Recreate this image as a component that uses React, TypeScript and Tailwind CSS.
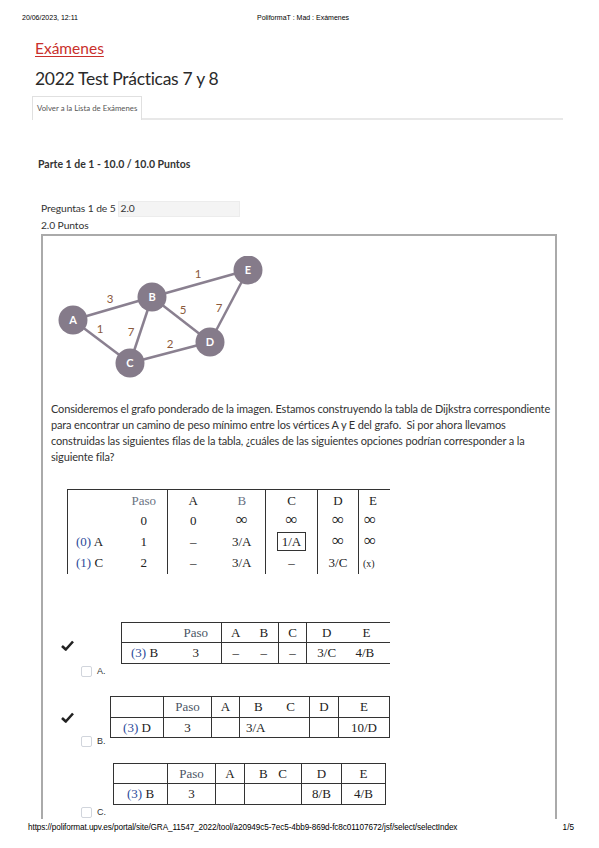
import React from 'react';

const sans = { fontFamily: '"Liberation Sans", Arial, sans-serif' };
const lato = { fontFamily: 'Lato, "Open Sans", sans-serif' };
const serif = { fontFamily: '"Liberation Serif", "DejaVu Serif", serif' };

const CheckMark = () => (
  <svg width="13" height="11" viewBox="0 0 13 11" className="shrink-0">
    <path d="M1 6 L4.8 9.5 L12 1.5" fill="none" stroke="#222" strokeWidth="2.6" strokeLinejoin="round" />
  </svg>
);

const Box = ({ label }: { label: string }) => (
  <div className="flex items-center gap-[5px]">
    <span className="w-[11px] h-[11px] border border-gray-300 rounded-[2px] bg-white" />
    <span className="text-[9px] text-[#333]" style={sans}>{label}</span>
  </div>
);

const Graph = () => {
  const n: Record<string, [number, number]> = {
    A: [22, 64], B: [101, 41], E: [197, 14], D: [159, 86], C: [79, 107],
  };
  const edges: [string, string][] = [['A', 'B'], ['A', 'C'], ['B', 'C'], ['B', 'D'], ['B', 'E'], ['D', 'E'], ['C', 'D']];
  const labels: [string, number, number][] = [
    ['3', 59, 47], ['1', 49, 77], ['7', 80, 80], ['5', 132, 58], ['1', 147, 22], ['7', 168, 56], ['2', 119, 92],
  ];
  return (
    <svg width="222" height="124" viewBox="0 0 222 124">
      {edges.map(([a, b]) => (
        <line key={a + b} x1={n[a][0]} y1={n[a][1]} x2={n[b][0]} y2={n[b][1]} stroke="#8a8090" strokeWidth="2.5" />
      ))}
      {labels.map(([t, x, y], i) => (
        <text key={i} x={x} y={y} textAnchor="middle" fontSize="11.5" fill="#8b5a3c" style={lato}>{t}</text>
      ))}
      {Object.entries(n).map(([k, [x, y]]) => (
        <g key={k}>
          <circle cx={x} cy={y} r="14.5" fill="#857b8a" />
          <text x={x} y={y + 4} textAnchor="middle" fontSize="11" fontWeight="bold" fill="#fff" style={lato}>{k}</text>
        </g>
      ))}
    </svg>
  );
};

const blue = 'text-[#2a4a9a]';
const Inf = () => <span className="text-[17px] leading-[10px]">∞</span>;

const DijkstraTable = () => {
  const cell = 'h-[21px] text-center px-0 font-normal';
  return (
    <div className="w-[323px] overflow-hidden ml-[16px]">
      <table className="border-collapse text-[13px] text-[#222] table-fixed w-[330px]" style={serif}>
        <colgroup>
          <col className="w-[53px]" /><col className="w-[47px]" /><col className="w-[51px]" /><col className="w-[47px]" />
          <col className="w-[52px]" /><col className="w-[41px]" /><col className="w-[39px]" />
        </colgroup>
        <tbody>
          <tr className="border-t-[1.5px] border-[#333]">
            <td className={`${cell} border-l border-[#333]`} />
            <td className={`${cell} border-r border-[#333] text-gray-500`}>Paso</td>
            <td className={cell}>A</td>
            <td className={`${cell} border-r border-[#333] text-gray-500`}>B</td>
            <td className={`${cell} border-r border-[#333]`}>C</td>
            <td className={`${cell} border-r border-[#333]`}>D</td>
            <td className={`${cell} text-left pl-[10px]`}>E</td>
          </tr>
          <tr>
            <td className={`${cell} border-l border-[#333]`} />
            <td className={`${cell} border-r border-[#333]`}>0</td>
            <td className={cell}>0</td>
            <td className={`${cell} border-r border-[#333]`}><Inf /></td>
            <td className={`${cell} border-r border-[#333]`}><Inf /></td>
            <td className={`${cell} border-r border-[#333]`}><Inf /></td>
            <td className={`${cell} text-left pl-[5px]`}><Inf /></td>
          </tr>
          <tr>
            <td className={`${cell} border-l border-[#333] text-left pl-[8px]`}><span className={blue}>(0)</span> A</td>
            <td className={`${cell} border-r border-[#333]`}>1</td>
            <td className={cell}>–</td>
            <td className={`${cell} border-r border-[#333]`}>3/A</td>
            <td className={`${cell} border-r border-[#333]`}><span className="border border-[#333] px-[4px] py-[1px]">1/A</span></td>
            <td className={`${cell} border-r border-[#333]`}><Inf /></td>
            <td className={`${cell} text-left pl-[5px]`}><Inf /></td>
          </tr>
          <tr>
            <td className={`${cell} border-l border-[#333] text-left pl-[8px]`}><span className={blue}>(1)</span> C</td>
            <td className={`${cell} border-r border-[#333]`}>2</td>
            <td className={cell}>–</td>
            <td className={`${cell} border-r border-[#333]`}>3/A</td>
            <td className={`${cell} border-r border-[#333]`}>–</td>
            <td className={`${cell} border-r border-[#333]`}>3/C</td>
            <td className={`${cell} text-left pl-[4px] text-[10px]`}>(x)</td>
          </tr>
        </tbody>
      </table>
    </div>
  );
};

const OptionA = () => {
  const c = 'h-[20px] text-center px-0 border-[#333]';
  return (
    <div className="w-[269px] overflow-hidden">
      <table className="border-collapse text-[13px] text-[#222] table-fixed w-[280px]" style={serif}>
        <colgroup>
          <col className="w-[49px]" /><col className="w-[51px]" /><col className="w-[28px]" /><col className="w-[29px]" />
          <col className="w-[28px]" /><col className="w-[40px]" /><col className="w-[55px]" />
        </colgroup>
        <tbody>
          <tr className="border-t border-b border-[#333]">
            <td className={`${c} border-l`} />
            <td className={`${c} border-r text-gray-600`}>Paso</td>
            <td className={c}>A</td>
            <td className={`${c} border-r`}>B</td>
            <td className={`${c} border-r`}>C</td>
            <td className={c}>D</td>
            <td className={`${c} text-left pl-[16px]`}>E</td>
          </tr>
          <tr className="border-b border-[#333]">
            <td className={`${c} border-l text-left pl-[9px] whitespace-nowrap`}><span className={blue}>(3)</span> B</td>
            <td className={`${c} border-r`}>3</td>
            <td className={c}>–</td>
            <td className={`${c} border-r`}>–</td>
            <td className={`${c} border-r`}>–</td>
            <td className={c}>3/C</td>
            <td className={`${c} text-left pl-[9px]`}>4/B</td>
          </tr>
        </tbody>
      </table>
    </div>
  );
};

const OptionTable = ({ widths, row }: { widths: number[]; row: React.ReactNode[] }) => {
  const c = 'h-[20px] px-0 border border-[#333] text-center';
  const head: React.ReactNode[] = [
    '',
    <span className="text-gray-600">Paso</span>,
    'A',
    <div className="flex justify-between px-[14px]"><span>B</span><span>C</span></div>,
    'D',
    'E',
  ];
  return (
    <table className="border-collapse text-[13px] text-[#222] table-fixed" style={{ ...serif, width: widths.reduce((a, b) => a + b, 0) }}>
      <colgroup>
        {widths.map((w, i) => <col key={i} style={{ width: w }} />)}
      </colgroup>
      <tbody>
        <tr>{head.map((h, i) => <td key={i} className={c}>{h}</td>)}</tr>
        <tr>{row.map((h, i) => <td key={i} className={c}>{h}</td>)}</tr>
      </tbody>
    </table>
  );
};

export default function App() {
  return (
    <div className="w-[599px] h-[848px] bg-white relative overflow-hidden text-[#333]" style={lato}>
      {/* print header */}
      <div className="flex h-[36px] items-center px-[22px] text-[7px] text-black" style={sans}>
        <span className="w-[235px]">20/06/2023, 12:11</span>
        <span>PoliformaT : Mad : Exámenes</span>
      </div>

      <div className="px-[35px]">
        <a className="block text-[15.5px] text-[#c9302c] underline underline-offset-2 leading-[22px] mt-[1px]">Exámenes</a>
        <h1 className="text-[17.5px] text-[#2a2a2a] leading-[24px] mt-[8px] tracking-[-0.3px]">2022 Test Prácticas 7 y 8</h1>
        <div className="flex mt-[5px] border-b-2 border-[#e8e8e8] w-[531px] -ml-[3px]">
          <div className="border border-b-0 border-[#e0e0e0] h-[24px] px-[4px] flex items-center text-[7.8px] text-[#555] -mb-[2px] bg-white">
            Volver a la Lista de Exámenes
          </div>
        </div>

        <h2 className="text-[10.5px] font-bold text-[#333] mt-[37px] ml-[3px] leading-[14px]">Parte 1 de 1 - 10.0 / 10.0 Puntos</h2>

        <div className="ml-[6px] mt-[29px] text-[10.3px] text-[#333] tracking-[-0.1px]">
          <div className="flex items-center h-[17px]">
            <span>Preguntas 1 de 5</span>
            <span className="ml-[2px] w-[122px] h-[16px] bg-[#f4f4f4] border border-[#ececec] flex items-center px-[2px] text-[10.3px]">2.0</span>
          </div>
          <div className="leading-[14px] mt-[1px]">2.0 Puntos</div>
        </div>

        {/* question box */}
        <div className="ml-[6px] mt-[2px] w-[516px] h-[585px] border-2 border-b-0 border-[#aaa] pl-[8px] pt-[20px]">
          <Graph />
          <p className="mt-[21px] text-[11px] leading-[16px] text-[#333] w-[500px] tracking-[-0.15px]">
            Consideremos el grafo ponderado de la imagen. Estamos construyendo la tabla de Dijkstra correspondiente
            para encontrar un camino de peso mínimo entre los vértices A y E del grafo.&nbsp; Si por ahora llevamos
            construidas las siguientes filas de la tabla, ¿cuáles de las siguientes opciones podrían corresponder a la
            siguiente fila?
          </p>

          <div className="mt-[24px]">
            <DijkstraTable />
          </div>

          {/* option A */}
          <div className="mt-[48px] flex items-center">
            <div className="w-[70px] pl-[10px] pt-[6px]"><CheckMark /></div>
            <OptionA />
          </div>
          <div className="ml-[30px] mt-[1px]"><Box label="A." /></div>

          {/* option B */}
          <div className="mt-[18px] flex items-center">
            <div className="w-[59px] pl-[10px]"><CheckMark /></div>
            <OptionTable
              widths={[53, 48, 28, 70, 29, 51]}
              row={[
                <span className="whitespace-nowrap"><span className={blue}>(3)</span> D</span>,
                '3',
                '',
                <div className="text-left pl-[6px]">3/A</div>,
                '',
                '10/D',
              ]}
            />
          </div>
          <div className="ml-[30px] mt-[-3px]"><Box label="B." /></div>

          {/* option C */}
          <div className="mt-[14px] flex items-center">
            <div className="w-[62px]" />
            <OptionTable
              widths={[54, 48, 29, 57, 40, 44]}
              row={[
                <span className="whitespace-nowrap"><span className={blue}>(3)</span> B</span>,
                '3',
                '',
                '',
                '8/B',
                '4/B',
              ]}
            />
          </div>
          <div className="ml-[30px] mt-[1px]"><Box label="C." /></div>
        </div>
      </div>

      {/* print footer */}
      <div className="absolute left-0 right-0 top-[822px] flex items-center px-[28px] text-[8.2px] text-black" style={sans}>
        <span className="flex-1 tracking-[-0.1px]">https://poliformat.upv.es/portal/site/GRA_11547_2022/tool/a20949c5-7ec5-4bb9-869d-fc8c01107672/jsf/select/selectIndex</span>
        <span className="mr-[-3px]">1/5</span>
      </div>
    </div>
  );
}
